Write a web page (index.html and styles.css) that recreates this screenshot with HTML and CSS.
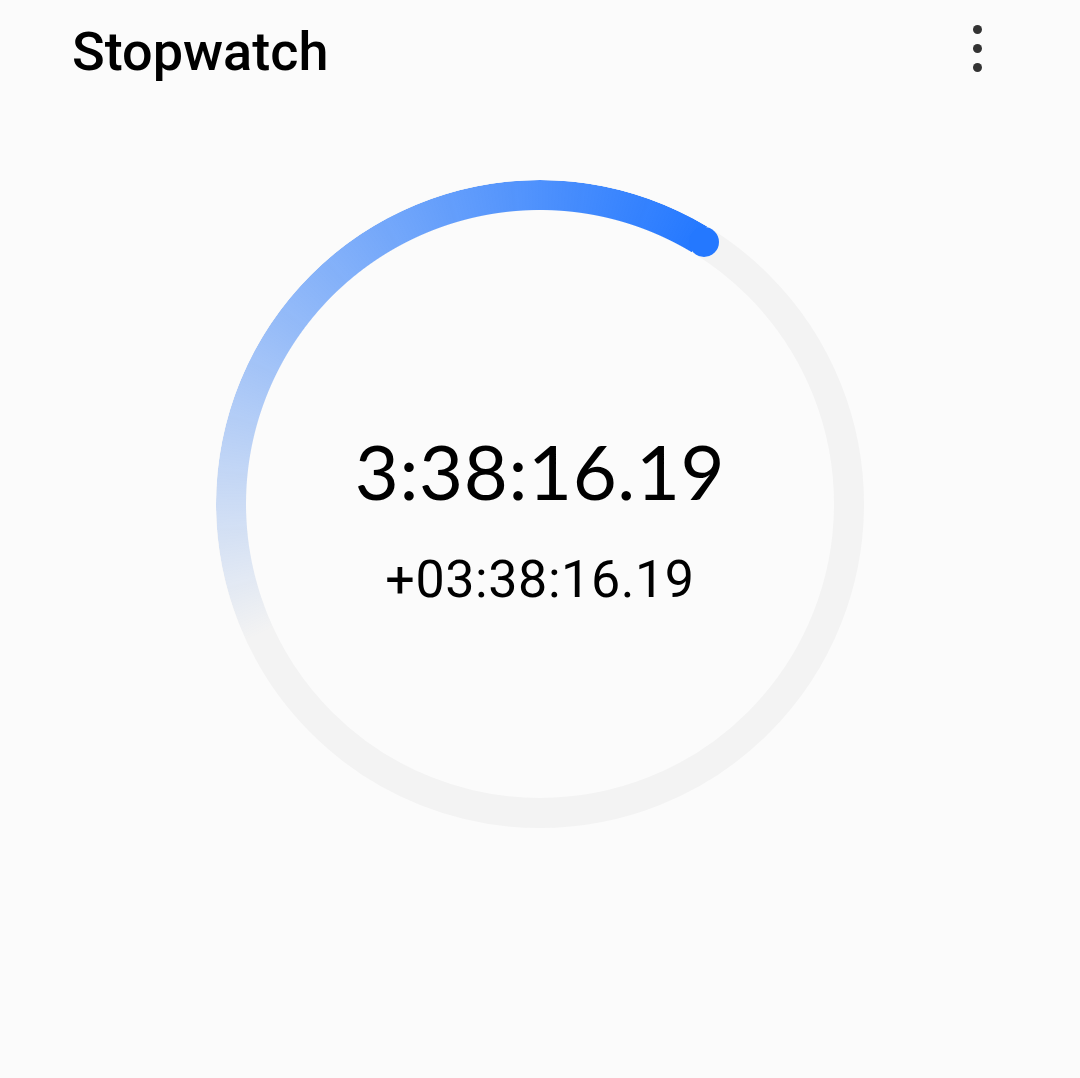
FILE: index.html
```html
<!DOCTYPE html>
<html lang="en">
<head>
  <meta charset="UTF-8">
  <meta name="viewport" content="width=device-width, initial-scale=1">
  <title>Stopwatch</title>
  <link rel="stylesheet" href="styles.css">
</head>
<body>
  <header class="top-bar">
    <h1 class="title">Stopwatch</h1>
    <button class="more-btn" aria-label="More options">
      <span class="dot"></span>
      <span class="dot"></span>
      <span class="dot"></span>
    </button>
  </header>

  <!-- Dial with running time -->
  <main class="dial-wrap">
    <div class="dial">
      <div class="dial-progress"></div>
      <div class="dial-cap"></div>
      <div class="time-main">3:38:16.19</div>
      <div class="time-lap">+03:38:16.19</div>
    </div>
  </main>
</body>
</html>
```

FILE: styles.css
```css
* {
  box-sizing: border-box;
}

body {
  margin: 0;
  width: 1080px;
  height: 1078px;
  background: #fbfbfb;
  color: #000;
  font-family: 'Roboto', 'Noto Sans', sans-serif;
}

.top-bar {
  display: flex;
  justify-content: space-between;
  align-items: flex-start;
  padding: 20px 94px 0 72px;
  height: 85px;
}

.title {
  margin: 0;
  font-size: 54px;
  line-height: 64px;
  font-weight: 500;
}

.more-btn {
  display: flex;
  flex-direction: column;
  gap: 10px;
  padding: 5px 4px;
  margin: 0;
  background: none;
  border: none;
  cursor: pointer;
}

.dot {
  width: 9px;
  height: 9px;
  border-radius: 50%;
  background: #333;
}

.dial-wrap {
  display: flex;
  justify-content: center;
  padding-top: 95px;
}

.dial {
  position: relative;
  width: 648px;
  height: 648px;
  border: 30px solid #f3f3f3;
  border-radius: 50%;
  display: flex;
  flex-direction: column;
  align-items: center;
  padding-top: 222px;
}

/* gradient arc, cut to a ring with a radial mask */
.dial-progress {
  position: absolute;
  inset: -30px;
  border-radius: 50%;
  background: conic-gradient(from 245deg,
    rgba(36, 120, 255, 0) 0deg,
    rgba(36, 120, 255, 0.45) 60deg,
    rgba(36, 120, 255, 0.8) 115deg,
    rgba(36, 120, 255, 1) 146deg,
    transparent 146deg);
  -webkit-mask: radial-gradient(circle, transparent 293.5px, #000 294.5px, #000 323.5px, transparent 324.5px);
  mask: radial-gradient(circle, transparent 293.5px, #000 294.5px, #000 323.5px, transparent 324.5px);
}

/* rounded end of the arc, 32deg past twelve */
.dial-cap {
  position: absolute;
  left: 442.75px;
  top: 17px;
  width: 30px;
  height: 30px;
  border-radius: 50%;
  background: #2478ff;
}

.time-main {
  font-family: 'Lato', sans-serif;
  font-size: 76px;
  line-height: 77px;
  font-weight: 400;
  letter-spacing: 0.6px;
}

.time-lap {
  margin-top: 46px;
  font-size: 52px;
  line-height: 50px;
  letter-spacing: 0.6px;
}
```
